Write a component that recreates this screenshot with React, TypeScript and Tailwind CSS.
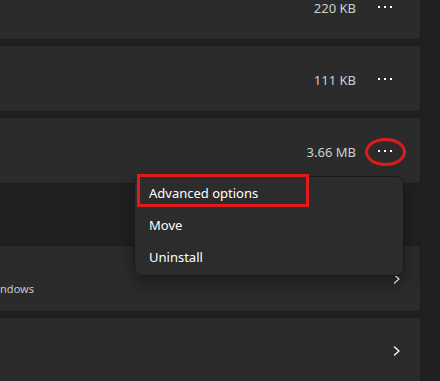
import React from "react";

const font = { fontFamily: '"Noto Sans", "Open Sans", sans-serif' };

function Dots() {
  return (
    <svg width="16" height="4" viewBox="0 0 16 4" className="block">
      <rect x="1" y="1" width="2" height="2" fill="#ffffff" />
      <rect x="7" y="1" width="2" height="2" fill="#ffffff" />
      <rect x="13" y="1" width="2" height="2" fill="#ffffff" />
    </svg>
  );
}

function Chevron() {
  return (
    <svg width="8" height="10" viewBox="0 0 8 10" className="block">
      <path d="M1.5 1 L6 5 L1.5 9" fill="none" stroke="#ffffff" strokeWidth="1.3" strokeLinecap="round" strokeLinejoin="round" />
    </svg>
  );
}

function SizeCard({ size }: { size: string }) {
  return (
    <div className="h-[67px] rounded-[4px] bg-[#2b2b2b] border border-[#1d1d1d] flex items-center justify-end pr-[19px]">
      <span className="text-[13px] leading-[18px] text-[#cfcfcf] mr-[13px] mt-[3px]">{size}</span>
      <div className="w-[32px] h-[32px] flex items-center justify-center">
        <Dots />
      </div>
    </div>
  );
}

function NavCard({ sub }: { sub?: string }) {
  return (
    <div className="h-[67px] rounded-[4px] bg-[#2b2b2b] border border-[#1d1d1d] flex items-center justify-between pr-[19px] overflow-hidden">
      <div className="flex flex-col pt-[20px]">
        {sub ? <span className="text-[11px] text-[#c8c8c8] ml-[6px] leading-[16px]">{sub}</span> : null}
      </div>
      <Chevron />
    </div>
  );
}

export default function App() {
  return (
    <div className="relative w-[440px] h-[381px] bg-[#202020] overflow-hidden" style={font}>
      <div className="flex flex-col gap-[5px] mt-[-27px] ml-[-20px] mr-[19px]">
        <SizeCard size="220 KB" />
        <SizeCard size="111 KB" />
        <SizeCard size="3.66 MB" />
        <div className="h-[51px]" />
        <NavCard sub="Windows" />
        <NavCard />
      </div>

      {/* context menu */}
      <div className="absolute left-[134px] top-[176px] w-[270px] h-[100px] rounded-[8px] bg-[#2c2c2c] border border-[#1a1a1a] shadow-[0_8px_16px_rgba(0,0,0,0.35)] py-[1px] flex flex-col">
        <div className="h-[32px] flex items-center pl-[14px] text-[13px] text-[#ffffff]">Advanced options</div>
        <div className="h-[32px] flex items-center pl-[14px] text-[13px] text-[#ffffff]">Move</div>
        <div className="h-[32px] flex items-center pl-[14px] text-[13px] text-[#ffffff]">Uninstall</div>
      </div>

      {/* annotations */}
      <div className="absolute left-[137px] top-[174px] w-[172px] h-[33px] border-[3px] border-[#e01b1b]" />
      <div className="absolute left-[365px] top-[138px] w-[41px] h-[28px] rounded-[50%] border-[3px] border-[#e01b1b]" />
    </div>
  );
}
